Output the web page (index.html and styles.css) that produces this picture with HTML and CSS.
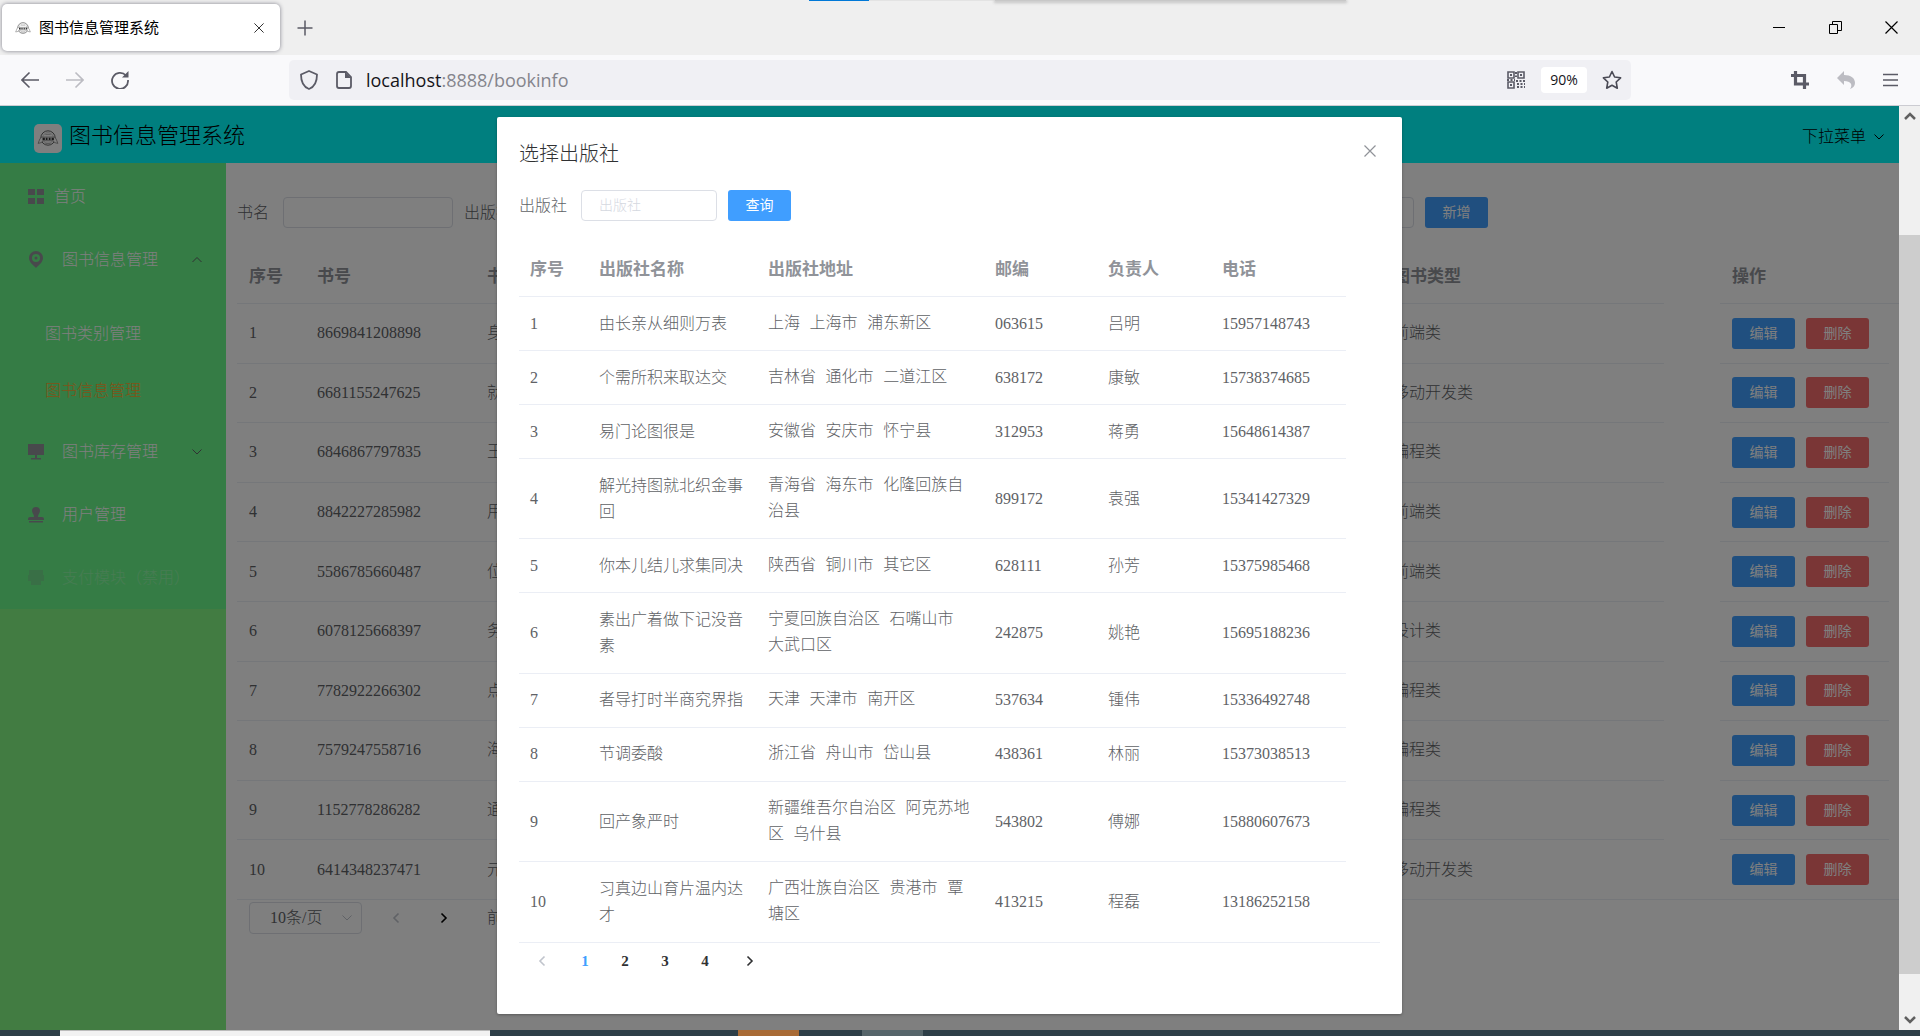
FILE: index.html
```html
<!DOCTYPE html>
<html lang="zh-CN">
<head>
<meta charset="utf-8">
<title>图书信息管理系统</title>
<link rel="stylesheet" href="styles.css">
</head>
<body>
<svg class="defs" aria-hidden="true">
  <symbol id="badge" viewBox="0 0 24 20">
    <circle cx="12" cy="10" r="8" fill="none" stroke="#555" stroke-width="1"/>
    <circle cx="12" cy="10" r="6" fill="none" stroke="#aaa" stroke-width=".6"/>
    <path d="M1 16l2-5 2-2h14l2 2 2 5-4-1-1-2H6l-1 2z" fill="#fff" stroke="#777" stroke-width=".8"/>
    <path d="M6 11h2.500M9.500 11h2M12.800 11h2M16 11h2.500" stroke="#333" stroke-width="2.600"/>
    <path d="M9 6h6M9 16h6" stroke="#999" stroke-width=".8"/>
  </symbol>
  <symbol id="down" viewBox="0 0 12 12"><path d="M1.500 3.500L6 8l4.500-4.500" fill="none" stroke="currentColor"/></symbol>
  <symbol id="up" viewBox="0 0 12 12"><path d="M1.500 8L6 3.500 10.500 8" fill="none" stroke="currentColor"/></symbol>
  <symbol id="left" viewBox="0 0 12 12"><path d="M8.500 1.500L4 6l4.500 4.500" fill="none" stroke="currentColor" stroke-width="1.600"/></symbol>
  <symbol id="right" viewBox="0 0 12 12"><path d="M3.500 1.500L8 6l-4.500 4.500" fill="none" stroke="currentColor" stroke-width="1.600"/></symbol>
  <symbol id="cross" viewBox="0 0 12 12"><path d="M.5.5l11 11M11.500.5l-11 11" fill="none" stroke="currentColor" stroke-width="1.200"/></symbol>
</svg>

<header class="tabstrip">
  <div class="behind"><i class="accent"></i><i class="pale"></i><i class="shade"></i></div>
  <div class="tab">
    <svg width="16" height="14"><use href="#badge"/></svg>
    <span class="tab-title">图书信息管理系统</span>
    <button class="plain" aria-label="关闭标签页"><svg width="10" height="10"><use href="#cross"/></svg></button>
  </div>
  <button class="plain new-tab" aria-label="新标签页"><svg width="16" height="16"><path d="M8 .5v15M.5 8h15" stroke="#5b5b66" stroke-width="1.500"/></svg></button>
  <div class="window-buttons">
    <button class="plain" aria-label="最小化"><svg width="13" height="13"><path d="M0 6.500h12" stroke="#000"/></svg></button>
    <button class="plain" aria-label="还原"><svg width="13" height="13"><path d="M.5 3.500h8v9h-8zM3.500 3.500v-3h9v9h-4" fill="none" stroke="#000"/></svg></button>
    <button class="plain" aria-label="关闭"><svg width="13" height="13"><path d="M.5.5l12 12M12.500.5l-12 12" stroke="#000" stroke-width="1.200"/></svg></button>
  </div>
</header>

<div class="toolbar">
  <div class="nav-buttons">
    <button class="plain" aria-label="后退"><svg width="18" height="18" fill="none" stroke="#5b5b66" stroke-width="1.600"><path d="M18 9H1M8.500 1.500L1 9l7.500 7.500"/></svg></button>
    <button class="plain" aria-label="前进"><svg width="18" height="18" fill="none" stroke="#bcbcc2" stroke-width="1.600"><path d="M0 9h17M9.500 1.500L17 9l-7.500 7.500"/></svg></button>
    <button class="plain" aria-label="重新加载"><svg width="18" height="18" fill="none" stroke="#5b5b66" stroke-width="1.800"><path d="M15 4.500A8 8 0 1 0 17 9"/><path d="M17.500 0v6.500H11z" fill="#5b5b66" stroke="none"/></svg></button>
  </div>
  <div class="address">
    <svg width="18" height="20" fill="none" stroke="#5b5b66" stroke-width="1.800"><path d="M9 1l8 3.500C17 11 14.500 17 9 19 3.500 17 1 11 1 4.500z" stroke-linejoin="round"/></svg>
    <svg width="16" height="18" fill="none" stroke="#5b5b66" stroke-width="1.800"><path d="M10 1H3Q1 1 1 3v12q0 2 2 2h10q2 0 2-2V6z"/><path d="M9 1l6 6H9z" fill="#5b5b66" stroke="none"/></svg>
    <span class="url">localhost<span class="path">:8888/bookinfo</span></span>
    <svg width="18" height="18" fill="none" stroke="#5b5b66" stroke-width="1.600"><path d="M1 1h6v6H1zM11 1h6v6h-6zM1 11h6v6H1z"/><path d="M3 4h2M13 4h2M3 14h2" stroke-width="2"/><path d="M9 1v5M9 10h9M10 13h8M10 16h8M0 9h8" stroke-dasharray="2 1.500" stroke-width="2"/></svg>
    <button class="plain zoom-level">90%</button>
    <svg width="20" height="20" fill="none" stroke="#4a4a55" stroke-width="1.600" stroke-linejoin="round"><path d="M10 1.500l2.600 5.500 6 .800-4.400 4.200 1.100 6.200L10 15.200l-5.300 3 1.100-6.200L1.400 7.800l6-.800z"/></svg>
  </div>
  <div class="tools">
    <button class="plain" aria-label="截图"><svg width="18" height="18" fill="none" stroke="#5b5b66" stroke-width="3.200"><path d="M4.500 0v13H18M0 4.500h13.500V18"/></svg></button>
    <button class="plain" aria-label="撤销"><svg width="18" height="18" fill="#bcbcc2"><path d="M7 0v4c7 0 11 3 11 8 0 3-2 5-5 6 3-4 1-8-6-8v4L0 7z"/></svg></button>
    <button class="plain" aria-label="菜单"><svg width="16" height="14"><path d="M0 1.500h15M0 7h15M0 12.500h15" stroke="#5b5b66" stroke-width="1.500"/></svg></button>
  </div>
</div>

<div class="window">
  <div class="viewport">
    <div class="app">
      <div class="app-header">
        <span class="logo"><svg width="22" height="18"><use href="#badge"/></svg></span>
        <span class="app-title">图书信息管理系统</span>
        <button class="plain dropdown">下拉菜单<svg width="12" height="12"><use href="#down"/></svg></button>
      </div>
      <div class="app-body">
        <aside class="sidebar">
          <nav class="menu">
            <a class="item home" href="#"><svg width="16" height="15" fill="#909399"><path d="M0 0h7v6H0zM9 0h7v6H9zM0 9h7v6H0zM9 9h7v6H9z"/></svg>首页</a>
            <a class="item" href="#"><svg width="16" height="17"><path fill="#909399" fill-rule="evenodd" d="M8 0a7 7 0 0 1 7 7c0 4-4 7-7 10-3-3-7-6-7-10a7 7 0 0 1 7-7zm0 3a4 4 0 1 0 0 8 4 4 0 0 0 0-8z"/><circle cx="8" cy="7" r="1.500" fill="#909399"/></svg><span>图书信息管理</span><svg class="arrow" width="12" height="12"><use href="#up"/></svg></a>
            <div class="submenu">
              <a href="#">图书类别管理</a>
              <a class="active" href="#">图书信息管理</a>
            </div>
            <a class="item" href="#"><svg width="16" height="16" fill="#909399"><path d="M0 0h16v11H0zM7 11h2v3H7zM3 14h10v1.500H3z"/></svg><span>图书库存管理</span><svg class="arrow" width="12" height="12"><use href="#down"/></svg></a>
            <a class="item" href="#"><svg width="16" height="16" fill="#909399"><path d="M8 0a4 4 0 0 1 4 4c0 2-2 3-2 6h4q2 0 2 2v1H0v-1q0-2 2-2h4c0-3-2-4-2-6a4 4 0 0 1 4-4zM1 14h14v1.500H1z"/></svg><span>用户管理</span></a>
            <a class="item disabled" href="#"><svg width="16" height="16" fill="#909399"><path d="M1 0h14v5H1zM0 5h16v6H0zM3 11h10v4H3z"/></svg><span>支付模块（禁用）</span></a>
          </nav>
        </aside>
        <main class="content">
          <form class="filters">
            <label for="book-name">书名</label>
            <input id="book-name" class="field name-field" type="text">
            <label for="book-publisher">出版社</label>
            <input id="book-publisher" class="field wide-field" type="text">
            <button class="btn" type="button">新增</button>
          </form>
          <table class="grid books">
            <colgroup><col class="c-index"><col class="c-isbn"><col><col class="c-type"><col class="c-gap"><col class="c-ops"><col class="c-gutter"></colgroup>
            <thead><tr><th>序号</th><th>书号</th><th>书名</th><th>图书类型</th><td class="gap"></td><th>操作</th><td class="gutter"></td></tr></thead>
            <tbody>
              <tr><td>1</td><td>8669841208898</td><td>身</td><td>前端类</td><td class="gap"></td><td><div class="ops"><button class="btn">编辑</button><button class="btn danger">删除</button></div></td><td class="gutter gap"></td></tr>
              <tr><td>2</td><td>6681155247625</td><td>就</td><td>移动开发类</td><td class="gap"></td><td><div class="ops"><button class="btn">编辑</button><button class="btn danger">删除</button></div></td><td class="gutter gap"></td></tr>
              <tr><td>3</td><td>6846867797835</td><td>王</td><td>编程类</td><td class="gap"></td><td><div class="ops"><button class="btn">编辑</button><button class="btn danger">删除</button></div></td><td class="gutter gap"></td></tr>
              <tr><td>4</td><td>8842227285982</td><td>用</td><td>前端类</td><td class="gap"></td><td><div class="ops"><button class="btn">编辑</button><button class="btn danger">删除</button></div></td><td class="gutter gap"></td></tr>
              <tr><td>5</td><td>5586785660487</td><td>位</td><td>前端类</td><td class="gap"></td><td><div class="ops"><button class="btn">编辑</button><button class="btn danger">删除</button></div></td><td class="gutter gap"></td></tr>
              <tr><td>6</td><td>6078125668397</td><td>务</td><td>设计类</td><td class="gap"></td><td><div class="ops"><button class="btn">编辑</button><button class="btn danger">删除</button></div></td><td class="gutter gap"></td></tr>
              <tr><td>7</td><td>7782922266302</td><td>点</td><td>编程类</td><td class="gap"></td><td><div class="ops"><button class="btn">编辑</button><button class="btn danger">删除</button></div></td><td class="gutter gap"></td></tr>
              <tr><td>8</td><td>7579247558716</td><td>海</td><td>编程类</td><td class="gap"></td><td><div class="ops"><button class="btn">编辑</button><button class="btn danger">删除</button></div></td><td class="gutter gap"></td></tr>
              <tr><td>9</td><td>1152778286282</td><td>通</td><td>编程类</td><td class="gap"></td><td><div class="ops"><button class="btn">编辑</button><button class="btn danger">删除</button></div></td><td class="gutter gap"></td></tr>
              <tr><td>10</td><td>6414348237471</td><td>元</td><td>移动开发类</td><td></td><td><div class="ops"><button class="btn">编辑</button><button class="btn danger">删除</button></div></td><td class="gutter"></td></tr>
            </tbody>
          </table>
          <div class="pager">
            <div class="page-size">
              <select aria-label="每页条数"><option>10条/页</option></select>
              <svg width="12" height="12"><use href="#down"/></svg>
            </div>
            <button class="plain off" aria-label="上一页"><svg width="12" height="12"><use href="#left"/></svg></button>
            <button class="plain" aria-label="下一页"><svg width="12" height="12"><use href="#right"/></svg></button>
            <span class="jump">前往</span>
          </div>
        </main>
      </div>
    </div>

    <div class="overlay">
      <section class="dialog" role="dialog" aria-labelledby="dialog-title">
        <div class="dialog-head">
          <h2 id="dialog-title">选择出版社</h2>
          <button class="plain" aria-label="关闭"><svg width="12" height="12"><use href="#cross"/></svg></button>
        </div>
        <form class="search">
          <label for="publisher">出版社</label>
          <input id="publisher" class="field publisher-field" type="text" placeholder="出版社">
          <button class="btn" type="button">查询</button>
        </form>
        <div class="table-wrap">
          <table class="grid publishers">
            <colgroup><col class="p-index"><col class="p-name"><col class="p-address"><col class="p-code"><col class="p-person"><col></colgroup>
            <thead><tr><th>序号</th><th>出版社名称</th><th>出版社地址</th><th>邮编</th><th>负责人</th><th>电话</th></tr></thead>
            <tbody>
              <tr><td>1</td><td>由长亲从细则万表</td><td class="place">上海 上海市 浦东新区</td><td>063615</td><td>吕明</td><td>15957148743</td></tr>
              <tr><td>2</td><td>个需所积来取达交</td><td class="place">吉林省 通化市 二道江区</td><td>638172</td><td>康敏</td><td>15738374685</td></tr>
              <tr><td>3</td><td>易门论图很是</td><td class="place">安徽省 安庆市 怀宁县</td><td>312953</td><td>蒋勇</td><td>15648614387</td></tr>
              <tr><td>4</td><td>解光持图就北织金事回</td><td class="place">青海省 海东市 化隆回族自治县</td><td>899172</td><td>袁强</td><td>15341427329</td></tr>
              <tr><td>5</td><td>你本儿结儿求集同决</td><td class="place">陕西省 铜川市 其它区</td><td>628111</td><td>孙芳</td><td>15375985468</td></tr>
              <tr><td>6</td><td>素出广着做下记没音素</td><td class="place">宁夏回族自治区 石嘴山市 大武口区</td><td>242875</td><td>姚艳</td><td>15695188236</td></tr>
              <tr><td>7</td><td>者导打时半商究界指</td><td class="place">天津 天津市 南开区</td><td>537634</td><td>锺伟</td><td>15336492748</td></tr>
              <tr><td>8</td><td>节调委酸</td><td class="place">浙江省 舟山市 岱山县</td><td>438361</td><td>林丽</td><td>15373038513</td></tr>
              <tr><td>9</td><td>回产象严时</td><td class="place">新疆维吾尔自治区 阿克苏地区 乌什县</td><td>543802</td><td>傅娜</td><td>15880607673</td></tr>
              <tr><td>10</td><td>习真边山育片温内达才</td><td class="place">广西壮族自治区 贵港市 覃塘区</td><td>413215</td><td>程磊</td><td>13186252158</td></tr>
            </tbody>
          </table>
        </div>
        <div class="pages">
          <button class="plain off" aria-label="上一页"><svg width="12" height="12"><use href="#left"/></svg></button>
          <button class="plain current">1</button>
          <button class="plain">2</button>
          <button class="plain">3</button>
          <button class="plain">4</button>
          <button class="plain" aria-label="下一页"><svg width="12" height="12"><use href="#right"/></svg></button>
        </div>
      </section>
    </div>
  </div>
  <div class="scrollbar">
    <svg width="12" height="8"><path d="M1 7l5-5 5 5" fill="none" stroke="#606060" stroke-width="2.500"/></svg>
    <div class="track"><div class="thumb"></div></div>
    <svg width="12" height="8"><path d="M1 1l5 5 5-5" fill="none" stroke="#606060" stroke-width="2.500"/></svg>
  </div>
</div>
<footer class="desktop"><i class="paper"></i><i class="orange"></i><i class="slate"></i></footer>
</body>
</html>
```

FILE: styles.css
```css
* { box-sizing: border-box; }
body {
  margin: 0;
  min-height: 100vh;
  display: flex;
  flex-direction: column;
  font: 300 16px/26px "Liberation Serif", "Noto Sans CJK SC", sans-serif;
  color: #606266;
}
svg { display: block; flex: none; }
button, input, select { font: inherit; color: inherit; }
a { color: inherit; text-decoration: none; }
.defs { position: absolute; width: 0; height: 0; }
.plain {
  display: flex;
  align-items: center;
  justify-content: center;
  border: 0;
  padding: 0;
  background: none;
}

/* browser tab strip */
.tabstrip {
  position: relative;
  display: flex;
  align-items: center;
  height: 55px;
  padding-left: 2px;
  background: #efefef;
}
.behind {
  position: absolute;
  top: 0;
  left: 809px;
  display: flex;
  height: 1px;
}
.behind i { height: 1px; }
.accent { width: 60px; background: #0078d7; }
.pale { width: 126px; background: #e3e3e3; }
.shade { width: 351px; background: #c8c8c8; box-shadow: 0 1px 3px 1px #c4c4c4; }
.tab {
  display: flex;
  align-items: center;
  width: 278px;
  height: 47px;
  padding: 0 16px 0 13px;
  border-radius: 5px;
  background: #fff;
  box-shadow: 0 0 4px #80808c;
}
.tab-title {
  flex: 1;
  padding-left: 8px;
  font-size: 15px;
  font-weight: 400;
  color: #000;
}
.tab .plain { color: #333; }
.new-tab { margin-left: 17px; }
.window-buttons {
  display: flex;
  gap: 43px;
  margin-left: auto;
  padding-right: 22px;
}

/* browser toolbar */
.toolbar {
  display: flex;
  align-items: center;
  height: 51px;
  border-bottom: 1px solid #ccccd2;
  background: #f9f9fb;
}
.nav-buttons {
  display: flex;
  gap: 27px;
  width: 289px;
  padding-left: 21px;
}
.address {
  display: flex;
  align-items: center;
  flex: 1;
  height: 40px;
  padding: 0 9px 0 11px;
  border-radius: 5px;
  background: #f0f0f4;
}
.address svg + svg { margin-left: 18px; }
.url {
  flex: 1;
  padding-left: 14px;
  font: 18px/26px "Open Sans", sans-serif;
  color: #15141a;
}
.path { color: #85858c; }
.zoom-level {
  width: 46px;
  height: 26px;
  margin: 0 15px 0 16px;
  border-radius: 4px;
  background: #fff;
  font: 14px/26px "Open Sans", sans-serif;
  color: #15141a;
}
.tools {
  display: flex;
  align-items: center;
  gap: 28px;
  width: 289px;
  justify-content: flex-end;
  padding-right: 21px;
}

/* page area */
.window { flex: 1; display: flex; }
.viewport { flex: 1; display: grid; min-width: 0; }
.app, .overlay { grid-area: 1 / 1; min-width: 0; }
.app { display: flex; flex-direction: column; background: #fff; }
.app-header {
  display: flex;
  align-items: center;
  height: 57px;
  padding: 0 14px 0 34px;
  background: #0ff;
  color: #000;
}
.logo {
  display: flex;
  align-items: center;
  justify-content: center;
  width: 28px;
  height: 29px;
  margin-top: 7px;
  border-radius: 5px;
  background: #fff;
}
.app-title { padding: 2px 0 0 7px; font-size: 22px; }
.dropdown { margin-left: auto; gap: 7px; margin-top: 4px; }
.app-body { flex: 1; display: flex; }

/* side menu */
.sidebar { width: 226px; flex: none; background: #84f884; }
.menu { padding-top: 2px; background: #6af88a; color: #fff; }
.item {
  display: flex;
  align-items: center;
  height: 63px;
  gap: 18px;
  padding: 0 23px 0 28px;
}
.home { gap: 10px; }
.arrow { margin-left: auto; color: #606266; }
.submenu { padding: 14px 0 1px; }
.submenu a { display: block; padding-left: 45px; line-height: 57px; }
.submenu .active { color: #ffa630; }
.disabled { opacity: .25; }

/* book list */
.content { flex: 1; min-width: 0; padding: 34px 0 0 11px; }
.filters, .search { display: flex; align-items: center; }
.field {
  height: 31px;
  border: 1px solid #dcdfe6;
  border-radius: 4px;
  padding: 0 17px;
  background: #fff;
  font-size: 14px;
}
.field::placeholder { color: #d5d8df; }
.name-field { width: 170px; margin: 0 11px 0 14px; }
.wide-field { flex: 1; margin: 0 11px 0 13px; }
.filters { padding-right: 411px; }
.btn {
  width: 63px;
  height: 31px;
  border: 0;
  border-radius: 3px;
  padding: 0;
  background: #409eff;
  font-size: 14px;
  font-weight: 400;
  line-height: 31px;
  color: #fff;
}
.danger { background: #f56c6c; }
.grid {
  width: 100%;
  border-collapse: separate;
  border-spacing: 0;
  table-layout: fixed;
}
.grid th, .grid td {
  padding: 13px 11px;
  border-bottom: 1px solid #ebeef5;
  text-align: left;
  vertical-align: middle;
}
.grid th { padding: 15px 11px 13px; font-size: 17px; font-weight: bold; color: #909399; }
.books th, .books td { padding-left: 12px; }
.grid .gap { border-bottom: 0; }
.grid .gutter { padding: 0; }
.books { height: 651px; margin-top: 21px; }
.c-index { width: 68px; }
.c-isbn { width: 170px; }
.c-type { width: 283px; }
.c-gap { width: 56px; }
.c-ops { width: 169px; }
.c-gutter { width: 10px; }
.ops { display: flex; gap: 11px; }
.pager {
  display: flex;
  align-items: center;
  padding: 2px 0 0 12px;
}
.page-size { display: grid; align-items: center; margin-right: 16px; }
.page-size select, .page-size svg { grid-area: 1 / 1; }
.page-size select {
  appearance: none;
  width: 113px;
  height: 32px;
  border: 1px solid #dcdfe6;
  border-radius: 4px;
  padding: 0 20px;
  background: #fff;
}
.page-size svg { justify-self: end; margin-right: 9px; color: #c0c4cc; }
.pager .plain { width: 36px; height: 32px; color: #000; }
.pager .plain + .plain { margin-left: 12px; }
.jump { padding-left: 25px; }

/* publisher dialog */
.overlay {
  z-index: 1;
  display: flex;
  justify-content: center;
  align-items: flex-start;
  padding: 11px 0 16px;
  background: rgba(0, 0, 0, .5);
}
.dialog {
  width: 905px;
  max-width: 100%;
  padding: 20px 22px 37px;
  border-radius: 2px;
  background: #fff;
  box-shadow: 0 1px 3px rgba(0, 0, 0, .3);
}
.dialog-head {
  display: flex;
  justify-content: space-between;
  padding-right: 4px;
  color: #909399;
}
.dialog-head .plain { height: 28px; }
.dialog-head h2 {
  margin: 0;
  font-size: 20px;
  font-weight: 300;
  line-height: 34px;
  color: #303133;
}
.search { margin: 19px 0 21px; }
.publisher-field { width: 136px; margin: 0 11px 0 14px; }
.table-wrap { border-bottom: 1px solid #ebeef5; padding-right: 34px; }
.publishers { height: 700px; }
.publishers tbody tr:last-child td { border-bottom: 0; }
.publishers .place { font-family: "Liberation Mono", "Noto Sans CJK SC", sans-serif; }
.p-index { width: 69px; }
.p-name { width: 169px; }
.p-address { width: 227px; }
.p-code { width: 113px; }
.p-person { width: 114px; }
.pages { display: flex; padding-top: 2px; }
.pages .plain {
  width: 40px;
  height: 32px;
  font-size: 15px;
  font-weight: bold;
  color: #303133;
}
.pages .current { color: #409eff; }
.pages .plain:first-child { width: 46px; }
.pages .plain:last-child { width: 50px; }
.pager .off, .pages .off { color: #c0c4cc; }

/* scrollbar and desktop edge */
.scrollbar {
  display: flex;
  flex-direction: column;
  align-items: center;
  width: 21px;
  padding: 6px 0;
  background: #f0f0f0;
}
.track { flex: 1; align-self: stretch; padding: 115px 0 42px; display: flex; }
.thumb { flex: 1; background: #cdcdcd; }
.desktop { display: flex; height: 6px; background: #2d3e47; }
.paper { width: 430px; margin-left: 60px; border-top: 1px solid #bbb; background: #f2f2f2; }
.orange { width: 61px; margin-left: 248px; background: #a96b35; }
.slate { width: 61px; margin-left: 63px; background: #56656a; }
```
